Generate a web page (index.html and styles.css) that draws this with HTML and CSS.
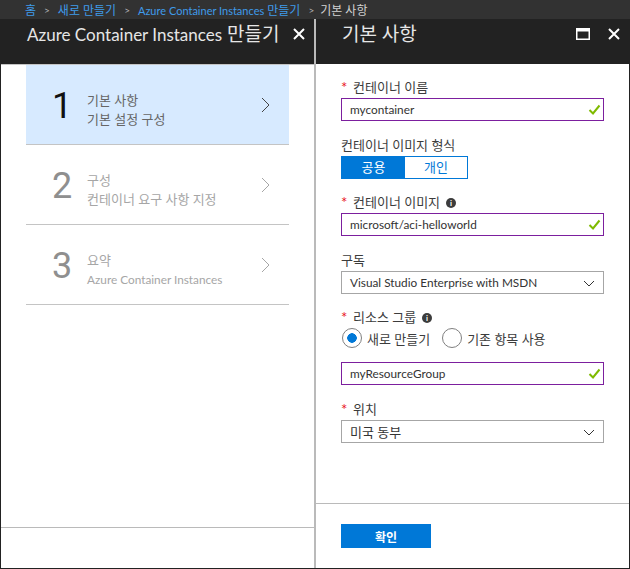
FILE: index.html
```html
<!DOCTYPE html>
<html lang="ko">

<head>
    <meta charset="UTF-8">
    <title>Azure Container Instances 만들기</title>
    <link rel="stylesheet" href="styles.css">
</head>

<body>
    <nav class="crumbs">
        <a>홈</a><span class="sep">&gt;</span>
        <a>새로 만들기</a><span class="sep">&gt;</span>
        <a><span class="latin">Azure Container Instances</span> 만들기</a><span class="sep">&gt;</span>
        <span class="current">기본 사항</span>
    </nav>
    <div class="blades">
        <section class="blade blade-left">
            <header class="blade-head">
                <h1><span class="latin">Azure Container Instances</span> 만들기</h1>
                <div class="head-icons">
                    <svg class="icon" viewBox="0 0 12 12"><path d="M1 1l10 10M11 1L1 11" /></svg>
                </div>
            </header>
            <div class="steps">
                <div class="step active">
                    <div class="num">1</div>
                    <div class="step-text">
                        <div>기본 사항</div>
                        <div>기본 설정 구성</div>
                    </div>
                    <svg class="chev" viewBox="0 0 9 16"><path d="M1 1l7 7-7 7" /></svg>
                </div>
                <div class="step">
                    <div class="num">2</div>
                    <div class="step-text">
                        <div>구성</div>
                        <div>컨테이너 요구 사항 지정</div>
                    </div>
                    <svg class="chev" viewBox="0 0 9 16"><path d="M1 1l7 7-7 7" /></svg>
                </div>
                <div class="step">
                    <div class="num">3</div>
                    <div class="step-text">
                        <div>요약</div>
                        <div class="latin">Azure Container Instances</div>
                    </div>
                    <svg class="chev" viewBox="0 0 9 16"><path d="M1 1l7 7-7 7" /></svg>
                </div>
            </div>
            <div class="left-foot"></div>
        </section>

        <section class="blade blade-right">
            <header class="blade-head">
                <h1>기본 사항</h1>
                <div class="head-icons">
                    <svg class="icon-max" viewBox="0 0 14 12"><path d="M0 0h14v12H0z M1.5 3.5v7h11v-7z" /></svg>
                    <svg class="icon" viewBox="0 0 12 12"><path d="M1 1l10 10M11 1L1 11" /></svg>
                </div>
            </header>
            <form class="form">
                <div class="field first">
                    <label><span class="req">*</span>컨테이너 이름</label>
                    <div class="input latin">mycontainer
                        <svg class="check" viewBox="0 0 13 11"><path d="M1.5 6l3.5 3.5L11.5 1.5" /></svg>
                    </div>
                </div>
                <div class="field">
                    <label>컨테이너 이미지 형식</label>
                    <div class="toggle">
                        <span class="on">공용</span>
                        <span>개인</span>
                    </div>
                </div>
                <div class="field">
                    <label><span class="req">*</span>컨테이너 이미지<i class="info">i</i></label>
                    <div class="input latin">microsoft/aci-helloworld
                        <svg class="check" viewBox="0 0 13 11"><path d="M1.5 6l3.5 3.5L11.5 1.5" /></svg>
                    </div>
                </div>
                <div class="field">
                    <label>구독</label>
                    <div class="select latin">Visual Studio Enterprise with MSDN
                        <svg class="caret" viewBox="0 0 12 7"><path d="M1 1l5 5 5-5" /></svg>
                    </div>
                </div>
                <div class="field">
                    <label><span class="req">*</span>리소스 그룹<i class="info">i</i></label>
                    <div class="radios">
                        <span class="radio checked">새로 만들기</span>
                        <span class="radio">기존 항목 사용</span>
                    </div>
                    <div class="input rg latin">myResourceGroup
                        <svg class="check" viewBox="0 0 13 11"><path d="M1.5 6l3.5 3.5L11.5 1.5" /></svg>
                    </div>
                </div>
                <div class="field">
                    <label><span class="req">*</span>위치</label>
                    <div class="select">미국 동부
                        <svg class="caret" viewBox="0 0 12 7"><path d="M1 1l5 5 5-5" /></svg>
                    </div>
                </div>
            </form>
            <div class="right-foot">
                <button type="button">확인</button>
            </div>
        </section>
    </div>
</body>

</html>
```

FILE: styles.css
```css
* {
    box-sizing: border-box;
}

html,
body {
    height: 100%;
}

body {
    margin: 0;
    display: flex;
    flex-direction: column;
    overflow: hidden;
    background: #fff;
    color: #3c3c3c;
    font-family: Lato, "Noto Sans CJK KR", sans-serif;
    font-size: 13px;
}

.latin {
    font-size: 11.8px;
}

.crumbs {
    height: 19px;
    padding-left: 25px;
    display: flex;
    align-items: center;
    background: #323232;
    font-size: 12px;
    white-space: nowrap;
    overflow: hidden;
}

.crumbs a {
    color: #3f9bea;
}

.crumbs .latin {
    font-size: 11px;
}

.crumbs .sep {
    color: #b4b4b4;
    margin: 0 8px;
    font-size: 10px;
}

.crumbs .current {
    margin-left: -2px;
    color: #d2d2d2;
}

.blades {
    flex: 1;
    display: flex;
    min-height: 0;
    border-left: 1px solid #222;
    border-right: 1px solid #222;
    border-bottom: 1px solid #222;
}

.blade {
    display: flex;
    flex-direction: column;
    background: #fff;
}

.blade-left {
    width: 313px;
}

.blade-right {
    flex: 1;
    border-left: 2px solid #bababa;
}

.blade-head {
    height: 45px;
    flex: none;
    display: flex;
    justify-content: space-between;
    background: #222;
    color: #e6e6e6;
}

.blade-left .blade-head {
    padding: 3px 9px 0 26px;
}

.blade-right .blade-head {
    padding: 3px 9px 0 26px;
}

.blade-head h1 {
    margin: 0;
    font-size: 19px;
    line-height: 24px;
    font-weight: 400;
    white-space: nowrap;
}

.blade-head .latin {
    font-size: 17px;
}

.head-icons {
    display: flex;
    gap: 18px;
    padding-top: 6px;
}

.icon {
    width: 12px;
    height: 12px;
    fill: none;
    stroke: #fff;
    stroke-width: 2;
}

.icon-max {
    width: 14px;
    height: 12px;
    fill: #fff;
    fill-rule: evenodd;
}

.steps {
    flex: 1;
    padding: 0 25px;
    border-top: 1px solid #c4c4c4;
}

.step {
    height: 80px;
    display: flex;
    align-items: center;
    border-bottom: 1px solid #c4c4c4;
    color: #a6a6a6;
}

.step.active {
    background: #d7eaff;
    color: #666;
}

.num {
    width: 60px;
    padding-top: 2px;
    padding-left: 26px;
    font-family: Roboto, sans-serif;
    font-size: 36px;
    line-height: 40px;
    color: #8f8f8f;
}

.step.active .num {
    color: #111;
}

.step-text {
    flex: 1;
    padding-top: 11px;
    padding-left: 1px;
    font-size: 13px;
    line-height: 19px;
}

.chev {
    width: 9px;
    height: 16px;
    margin-right: 19px;
    fill: none;
    stroke: #a6a6a6;
    stroke-width: 1;
}

.step.active .chev {
    stroke: #444;
}

.left-foot {
    height: 41px;
    flex: none;
    border-top: 1px solid #bababa;
}

.form {
    flex: 1;
    padding: 15px 25px 0 25px;
}

.field {
    margin-bottom: 15.5px;
}

.field label {
    display: flex;
    align-items: center;
    height: 17px;
    margin-bottom: 2px;
    line-height: 17px;
}

.req {
    width: 12px;
    color: #e81123;
    font-size: 15px;
}

.info {
    width: 10px;
    height: 10px;
    margin-left: 6px;
    border-radius: 50%;
    background: #3c3c3c;
    color: #fff;
    font-size: 8px;
    font-style: normal;
    font-weight: 700;
    line-height: 10px;
    text-align: center;
}

.input,
.select {
    position: relative;
    height: 23px;
    padding-left: 8px;
    line-height: 22px;
    border: 1px solid #7c1f9e;
    color: #333;
}

.select {
    border-color: #a6a6a6;
}

.check {
    position: absolute;
    right: 2px;
    top: 5px;
    width: 13px;
    height: 11px;
    fill: none;
    stroke: #7fba00;
    stroke-width: 2;
}

.caret {
    position: absolute;
    right: 8px;
    top: 8px;
    width: 12px;
    height: 7px;
    fill: none;
    stroke: #333;
    stroke-width: 1;
}

.toggle {
    width: 127px;
    height: 23px;
    display: flex;
    border: 1px solid #0078d7;
    color: #0078d7;
    line-height: 21px;
    text-align: center;
}

.toggle span {
    flex: 1;
}

.toggle .on {
    flex: none;
    width: 63px;
    background: #0078d7;
    color: #fff;
}

.radios {
    display: flex;
    gap: 12px;
    height: 20px;
    padding-left: 1px;
    align-items: center;
}

.radio {
    display: flex;
    align-items: center;
}

.radio::before {
    content: "";
    width: 18px;
    height: 18px;
    margin-right: 5px;
    border: 1px solid #7f7f7f;
    border-radius: 50%;
    background: #fff;
}

.radio.checked::before {
    background: radial-gradient(circle, #0078d7 0, #0078d7 4.5px, #fff 5px);
}

.rg {
    margin-top: 14px;
}

.right-foot {
    height: 65px;
    flex: none;
    padding: 20px 25px 0;
    border-top: 1px solid #bababa;
}

.right-foot button {
    width: 90px;
    height: 24px;
    padding: 0;
    border: none;
    background: #0078d7;
    color: #fff;
    font-family: inherit;
    font-size: 12px;
    font-weight: 700;
}
```
